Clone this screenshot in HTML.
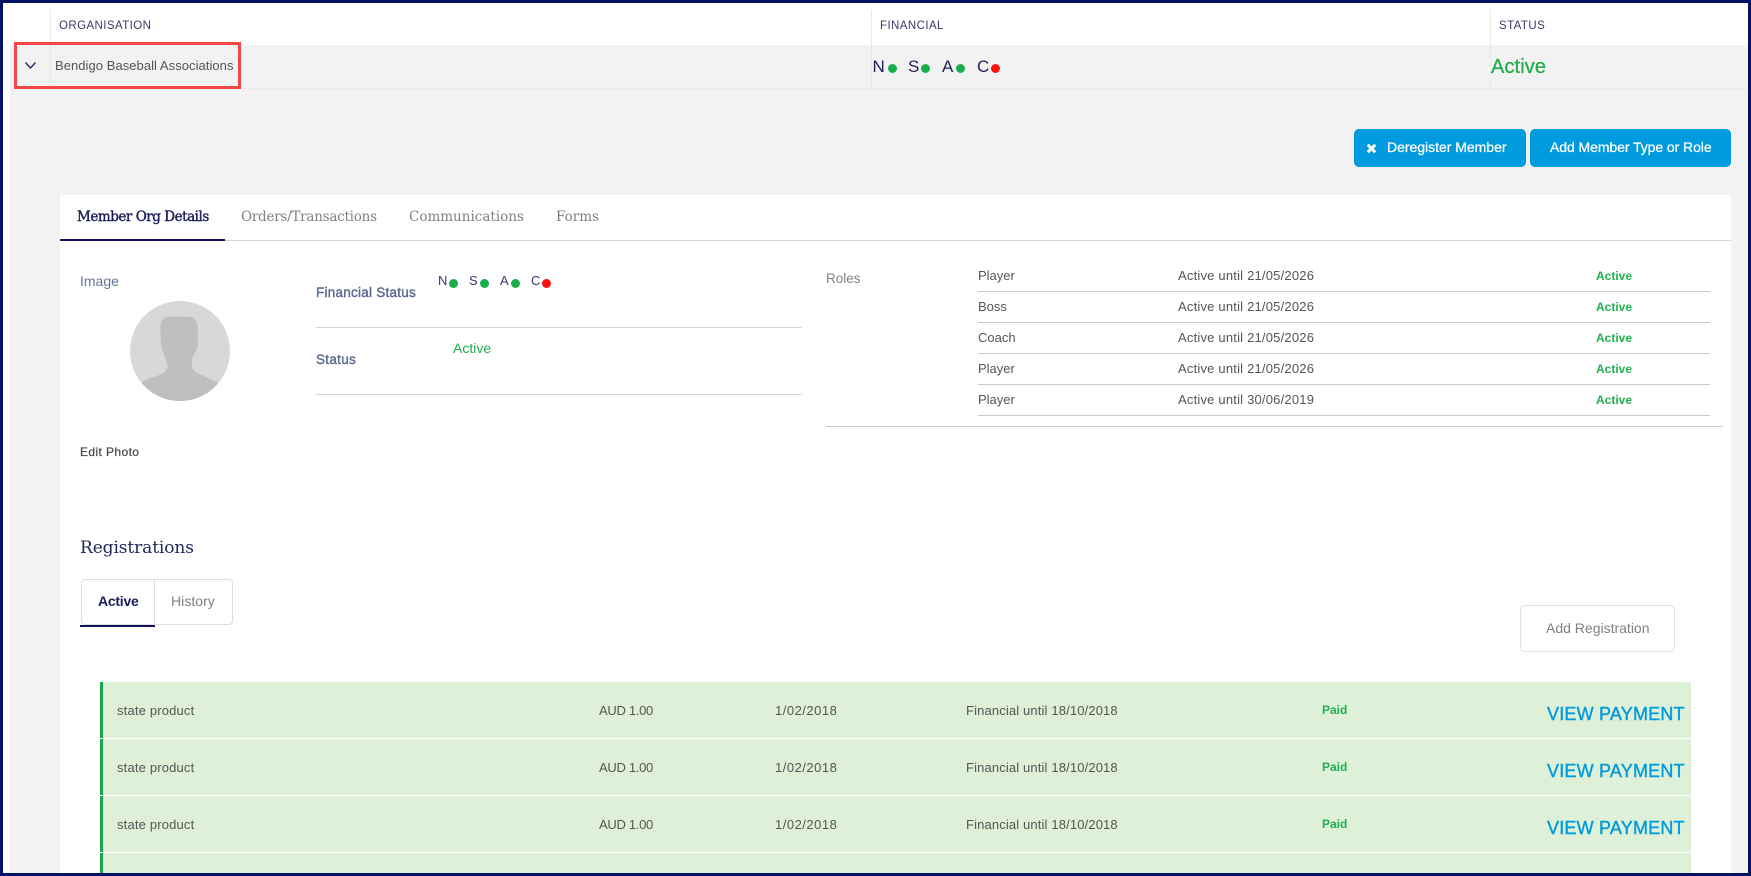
<!DOCTYPE html>
<html><head><meta charset="utf-8"><title>Member</title>
<style>
html,body{margin:0;padding:0;background:#fff}
#p{position:relative;width:1751px;height:876px;overflow:hidden;background:#fff;font-family:"Liberation Sans",sans-serif}
#p div,#p span.t{position:absolute}
.t{white-space:nowrap;line-height:20px;height:20px;display:block}
.h{font-size:11.5px;color:#3b3b6b;top:16px;letter-spacing:.42px}
.g{color:#1fae4b}
.n{font-size:13px;color:#555}
.c{font-size:13px;color:#555}
.sl{font-family:"DejaVu Serif",serif}
.ln{background:#ccc;height:1px}
.b{font-weight:bold;font-size:12px;color:#1fb14f}
.dot{border-radius:50%;background:#1aae4a}
.vp{font-size:18px;color:#009bde;left:1547px;letter-spacing:.2px;-webkit-text-stroke:.4px #009bde}
</style></head><body><div id="p">
<div style="left:10px;top:45px;width:1738px;height:831px;background:#f2f2f2"></div>
<div style="left:10px;top:88px;width:1738px;height:1px;background:#ebebeb"></div>
<div style="left:50px;top:10px;width:1px;height:78px;background:#e9e9e9"></div>
<div style="left:871px;top:10px;width:1px;height:78px;background:#e9e9e9"></div>
<div style="left:1490px;top:10px;width:1px;height:78px;background:#e9e9e9"></div>

<span class="t h" style="left:59px">ORGANISATION</span>
<span class="t h" style="left:880px">FINANCIAL</span>
<span class="t h" style="left:1499px">STATUS</span>

<div style="left:14px;top:42px;width:221px;height:41px;border:3px solid #f44648"></div>
<svg style="position:absolute;left:24px;top:61px" width="13" height="9" viewBox="0 0 13 9"><path d="M1.5 1.5 L6.5 7 L11.5 1.5" fill="none" stroke="#2b2b63" stroke-width="1.4"/></svg>
<span class="t" style="left:55px;top:56px;font-size:13px;color:#555;letter-spacing:.05px">Bendigo Baseball Associations</span>

<span class="t" style="left:872.500px;top:57px;font-size:17px;color:#23235c">N</span><div class="dot" style="left:887.500px;top:64px;width:9px;height:9px"></div>
<span class="t" style="left:908px;top:57px;font-size:17px;color:#23235c">S</span><div class="dot" style="left:921px;top:64px;width:9px;height:9px"></div>
<span class="t" style="left:942px;top:57px;font-size:17px;color:#23235c">A</span><div class="dot" style="left:955.500px;top:64px;width:9px;height:9px"></div>
<span class="t" style="left:977px;top:57px;font-size:17px;color:#23235c">C</span><div class="dot" style="left:990.500px;top:64px;width:9px;height:9px;background:#f11"></div>
<span class="t g" style="left:1491px;top:57px;font-size:20px;-webkit-text-stroke:.3px #1fae4b;letter-spacing:.1px">Active</span>

<div style="left:1354px;top:129px;width:172px;height:38px;background:#009bde;border-radius:5px"></div>
<div style="left:1530px;top:129px;width:201px;height:38px;background:#009bde;border-radius:5px"></div>
<svg style="position:absolute;left:1366px;top:143px" width="11" height="11" viewBox="0 0 11 11"><path d="M1.8 1.8 L9.2 9.2 M9.2 1.800 L1.8 9.2" stroke="#fff" stroke-width="3" fill="none"/></svg>
<span class="t" style="left:1387px;top:137px;font-size:14px;color:#fff;letter-spacing:-.02px;-webkit-text-stroke:.25px #fff">Deregister Member</span>
<span class="t" style="left:1550px;top:137px;font-size:14px;color:#fff;letter-spacing:-.07px;-webkit-text-stroke:.25px #fff">Add Member Type or Role</span>

<div style="left:60px;top:195px;width:1671px;height:681px;background:#fff"></div>
<div style="left:60px;top:240px;width:1671px;height:1px;background:#d8d8d8"></div>
<div style="left:60px;top:239px;width:165px;height:2px;background:#14145a"></div>
<span class="t sl" style="left:77px;top:207px;font-size:13.5px;color:#1c1c5c;letter-spacing:-.47px;-webkit-text-stroke:.4px #1c1c5c">Member Org Details</span>
<span class="t sl" style="left:241px;top:207px;font-size:13.5px;color:#808080;letter-spacing:-.24px">Orders/Transactions</span>
<span class="t sl" style="left:409px;top:207px;font-size:13.5px;color:#808080">Communications</span>
<span class="t sl" style="left:556px;top:207px;font-size:13.5px;color:#808080">Forms</span>

<span class="t" style="left:80px;top:271px;font-size:14px;color:#627499">Image</span>
<svg style="position:absolute;left:130px;top:301px" width="100" height="100" viewBox="130 301 100 100">
<defs><clipPath id="cc"><circle cx="180" cy="351" r="50"/></clipPath></defs>
<circle cx="180" cy="351" r="50" fill="#d8d8d8"/>
<path clip-path="url(#cc)" fill="#bfbfbf" d="M141.700 382 C147 379 152 378 156.700 376 C160 374.500 163 374 165 371.500 C167.500 369 168 367 167.500 365 C167 361 165 357 163.300 352.700 C162.500 350 162 348 161.700 346.700 C160.500 345 160.700 343 160.700 342 L160.300 329.300 C160.300 325 161 322 162.300 320 C164 317.500 167 316.700 170 316.700 L186.700 316.700 C190 316.700 194 317.500 195.700 320 C197 322 197.700 325 197.700 329.300 L197.700 346 C197 349 195.500 351 194.300 354 C193 357 191.700 360 191.700 362.700 C191.700 365 192 367 192.700 368.700 C194.500 371 197 373 200 374.300 L217 382 L225 410 L135 410 Z"/>
</svg>
<span class="t" style="left:80px;top:442px;font-size:12px;color:#4a4a4a;letter-spacing:.4px;-webkit-text-stroke:.25px #4a4a4a">Edit Photo</span>

<span class="t" style="left:316px;top:283px;font-size:13.5px;color:#586a8f;letter-spacing:.25px;-webkit-text-stroke:.4px #586a8f">Financial Status</span>
<span class="t" style="left:438px;top:271px;font-size:13px;color:#38386c">N</span><div class="dot" style="left:448.500px;top:278.500px;width:9px;height:9px"></div>
<span class="t" style="left:469px;top:271px;font-size:13px;color:#38386c">S</span><div class="dot" style="left:479.500px;top:278.500px;width:9px;height:9px"></div>
<span class="t" style="left:500px;top:271px;font-size:13px;color:#38386c">A</span><div class="dot" style="left:510.500px;top:278.500px;width:9px;height:9px"></div>
<span class="t" style="left:531px;top:271px;font-size:13px;color:#38386c">C</span><div class="dot" style="left:541.500px;top:278.500px;width:9px;height:9px;background:#f11"></div>
<div class="ln" style="left:316px;top:327px;width:486px;background:#d4d4d4"></div>
<span class="t" style="left:316px;top:350px;font-size:13.5px;color:#586a8f;letter-spacing:.3px;-webkit-text-stroke:.4px #586a8f">Status</span>
<span class="t g" style="left:453px;top:338px;font-size:14px">Active</span>
<div class="ln" style="left:316px;top:394px;width:486px;background:#d4d4d4"></div>

<span class="t" style="left:826px;top:269px;font-size:13.5px;color:#808080">Roles</span>
<span class="t c" style="left:978px;top:266px">Player</span><span class="t c" style="left:1178px;top:266px;letter-spacing:.2px">Active until 21/05/2026</span><span class="t b" style="left:1596px;top:266px">Active</span>
<div class="ln" style="left:978px;top:291px;width:732px"></div>
<span class="t c" style="left:978px;top:297px">Boss</span><span class="t c" style="left:1178px;top:297px;letter-spacing:.2px">Active until 21/05/2026</span><span class="t b" style="left:1596px;top:297px">Active</span>
<div class="ln" style="left:978px;top:322px;width:732px"></div>
<span class="t c" style="left:978px;top:328px">Coach</span><span class="t c" style="left:1178px;top:328px;letter-spacing:.2px">Active until 21/05/2026</span><span class="t b" style="left:1596px;top:328px">Active</span>
<div class="ln" style="left:978px;top:353px;width:732px"></div>
<span class="t c" style="left:978px;top:359px">Player</span><span class="t c" style="left:1178px;top:359px;letter-spacing:.2px">Active until 21/05/2026</span><span class="t b" style="left:1596px;top:359px">Active</span>
<div class="ln" style="left:978px;top:384px;width:732px"></div>
<span class="t c" style="left:978px;top:390px">Player</span><span class="t c" style="left:1178px;top:390px;letter-spacing:.2px">Active until 30/06/2019</span><span class="t b" style="left:1596px;top:390px">Active</span>
<div class="ln" style="left:978px;top:415px;width:732px"></div>
<div class="ln" style="left:826px;top:426px;width:897px"></div>

<span class="t sl" style="left:80px;top:538px;font-size:17px;color:#25255f;letter-spacing:-.1px">Registrations</span>
<div style="left:81px;top:579px;width:150px;height:44px;border:1px solid #ddd;border-radius:4px"></div>
<div style="left:154px;top:579px;width:1px;height:46px;background:#ddd"></div>
<div style="left:80px;top:625px;width:75px;height:2px;background:#14145a"></div>
<span class="t" style="left:98px;top:590.500px;font-size:14px;font-weight:bold;color:#1c1c5c;letter-spacing:-.25px">Active</span>
<span class="t" style="left:171px;top:590.500px;font-size:14px;color:#808080;letter-spacing:.05px">History</span>
<div style="left:1520px;top:605px;width:153px;height:45px;border:1px solid #e2e2e2;border-radius:5px"></div>
<span class="t" style="left:1546px;top:618px;font-size:14px;color:#808080;letter-spacing:0">Add Registration</span>

<div style="left:100px;top:682px;width:1591px;height:56px;background:#dff0d8"></div><div style="left:100px;top:682px;width:3px;height:56px;background:#1aa64f"></div>
<div style="left:100px;top:739px;width:1591px;height:56px;background:#dff0d8"></div><div style="left:100px;top:739px;width:3px;height:56px;background:#1aa64f"></div>
<div style="left:100px;top:796px;width:1591px;height:56px;background:#dff0d8"></div><div style="left:100px;top:796px;width:3px;height:56px;background:#1aa64f"></div>
<div style="left:100px;top:853px;width:1591px;height:23px;background:#dff0d8"></div><div style="left:100px;top:853px;width:3px;height:23px;background:#1aa64f"></div>

<span class="t n" style="left:117px;top:701px;letter-spacing:.17px">state product</span><span class="t n" style="left:599px;top:701px;letter-spacing:-.3px">AUD 1.00</span><span class="t n" style="left:775px;top:701px;letter-spacing:.5px">1/02/2018</span><span class="t n" style="left:966px;top:701px;letter-spacing:.14px">Financial until 18/10/2018</span><span class="t b" style="left:1322px;top:700px">Paid</span><span class="t vp" style="top:704px">VIEW PAYMENT</span>
<span class="t n" style="left:117px;top:758px;letter-spacing:.17px">state product</span><span class="t n" style="left:599px;top:758px;letter-spacing:-.3px">AUD 1.00</span><span class="t n" style="left:775px;top:758px;letter-spacing:.5px">1/02/2018</span><span class="t n" style="left:966px;top:758px;letter-spacing:.14px">Financial until 18/10/2018</span><span class="t b" style="left:1322px;top:757px">Paid</span><span class="t vp" style="top:761px">VIEW PAYMENT</span>
<span class="t n" style="left:117px;top:815px;letter-spacing:.17px">state product</span><span class="t n" style="left:599px;top:815px;letter-spacing:-.3px">AUD 1.00</span><span class="t n" style="left:775px;top:815px;letter-spacing:.5px">1/02/2018</span><span class="t n" style="left:966px;top:815px;letter-spacing:.14px">Financial until 18/10/2018</span><span class="t b" style="left:1322px;top:814px">Paid</span><span class="t vp" style="top:818px">VIEW PAYMENT</span>

<div style="left:0;top:0;width:1751px;height:3px;background:#021463"></div>
<div style="left:0;top:873px;width:1751px;height:3px;background:#021463"></div>
<div style="left:0;top:0;width:3px;height:876px;background:#021463"></div>
<div style="left:1748px;top:0;width:3px;height:876px;background:#021463"></div>
</div></body></html>
